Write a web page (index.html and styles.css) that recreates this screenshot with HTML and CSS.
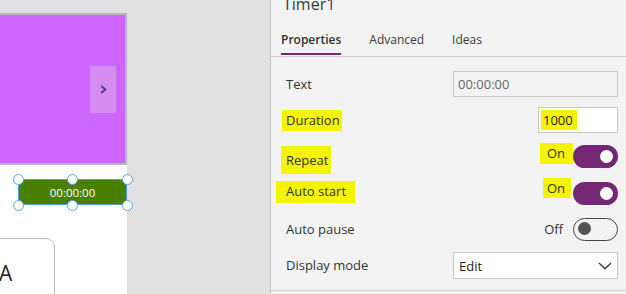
FILE: index.html
```html
<!DOCTYPE html>
<html>
<head>
<meta charset="utf-8">
<link rel="stylesheet" href="styles.css">
</head>
<body>
<div class="app">
  <div class="stage">
    <div class="canvas">
      <div class="gallery">
        <div class="nav-btn">
          <svg width="7" height="9" viewBox="0 0 7 9"><polyline points="1.2,1 5.4,4.5 1.2,8" fill="none" stroke="#4b3b8c" stroke-width="1.8"/></svg>
        </div>
      </div>
      <div class="timer">
        <span>00:00:00</span>
        <span class="handle tl"></span><span class="handle tm"></span><span class="handle tr"></span>
        <span class="handle bl"></span><span class="handle bm"></span><span class="handle br"></span>
      </div>
      <div class="card"><span class="card-text">A</span></div>
    </div>
  </div>
  <aside class="panel">
    <div class="title">Timer1</div>
    <nav class="tabs">
      <span class="tab active">Properties</span>
      <span class="tab">Advanced</span>
      <span class="tab">Ideas</span>
    </nav>
    <div class="props">
      <div class="row">
        <span class="label">Text</span>
        <div class="field">00:00:00</div>
      </div>
      <div class="row">
        <span class="label hl hl-duration">Duration</span>
        <div class="field small"><span class="hl num">1000</span></div>
      </div>
      <div class="row">
        <span class="label hl hl-repeat">Repeat</span>
        <div class="ctl"><span class="hl on1">On</span><span class="switch"></span></div>
      </div>
      <div class="row">
        <span class="label hl hl-auto">Auto start</span>
        <div class="ctl"><span class="hl on2">On</span><span class="switch"></span></div>
      </div>
      <div class="row">
        <span class="label">Auto pause</span>
        <div class="ctl"><span class="off-text">Off</span><span class="switch off"></span></div>
      </div>
      <div class="row">
        <span class="label">Display mode</span>
        <div class="select">
          <span>Edit</span>
          <svg width="14" height="8" viewBox="0 0 14 8"><polyline points="1,1 7,6.8 13,1" fill="none" stroke="#333" stroke-width="1.2"/></svg>
        </div>
      </div>
    </div>
    <div class="sep"></div>
  </aside>
</div>
</body>
</html>
```
FILE: styles.css
```css
* { box-sizing: border-box; }
html, body { margin: 0; padding: 0; }
body {
  width: 626px;
  height: 294px;
  overflow: hidden;
  font-family: "Open Sans", "Noto Sans", sans-serif;
  color: #333;
}
.app { display: flex; height: 294px; }

.stage {
  width: 270px;
  flex: none;
  background: #e1e1e1;
  padding-top: 13px;
  overflow: hidden;
}
.canvas {
  width: 127px;
  height: 281px;
  background: #fff;
}
.gallery {
  height: 152px;
  background: #cc66ff;
  border: 2px solid #b7b7b7;
  border-left: none;
  display: flex;
  justify-content: flex-end;
  align-items: center;
  padding-right: 9px;
}
.nav-btn {
  width: 26px;
  height: 47px;
  background: #d38cef;
  display: flex;
  align-items: center;
  justify-content: center;
}
.nav-btn svg { display: block; }

.timer {
  position: relative;
  margin: 14px 0 0 18px;
  width: 109px;
  height: 26px;
  background: #4b7f00;
  border: 1px solid #4a9fe3;
  color: #fff;
  font-size: 11.5px;
  display: flex;
  align-items: center;
  justify-content: center;
}
.handle {
  position: absolute;
  width: 11px;
  height: 11px;
  border-radius: 50%;
  background: #fff;
  border: 1.5px solid #5ea4e6;
}
.handle.tl { left: -6.5px; top: -6.5px; }
.handle.tm { left: calc(50% - 5.5px); top: -6.5px; }
.handle.tr { right: -6.5px; top: -6.5px; }
.handle.bl { left: -6.5px; bottom: -6.5px; }
.handle.bm { left: calc(50% - 5.5px); bottom: -6.5px; }
.handle.br { right: -6.5px; bottom: -6.5px; }

.card {
  margin: 33px 0 0 -15px;
  width: 70px;
  height: 80px;
  border: 1px solid #b9b9b9;
  border-radius: 9px;
  padding: 24px 0 0 13px;
  font-size: 21px;
  line-height: 21px;
  color: #222;
}

.panel {
  flex: 1;
  background: #f3f3f3;
  border-left: 1px solid #c6c6c6;
  color: #333;
}
.title {
  font-size: 16px;
  line-height: 20px;
  height: 20px;
  margin-top: -6px;
  padding-left: 12px;
  color: #3a3a3a;
}
.tabs {
  display: flex;
  padding-left: 10px;
  border-bottom: 1px solid #cecece;
}
.tab {
  font-size: 12px;
  line-height: 18px;
  padding: 17px 0 4px;
  margin-right: 28px;
  margin-bottom: 1px;
  border-bottom: 2px solid transparent;
  color: #3a3a3a;
}
.tab.active {
  font-weight: 600;
  border-bottom-color: #742774;
  color: #323130;
}

.props {
  padding: 9px 8px 0 15px;
  display: grid;
  grid-auto-rows: 36.3px;
}
.row {
  display: flex;
  align-items: center;
  justify-content: space-between;
  font-size: 13px;
}
.label { line-height: 19px; }
.hl { background: #f4f400; }
.hl-duration { padding: 1px 2px 1px 4px; margin-left: -4px; }
.hl-repeat { padding: 5px 3px 4px 5px; margin-left: -5px; margin-top: 6px; }
.hl-auto { padding: 1px 9px 2px 10px; margin-left: -10px; margin-bottom: 3px; }

.field {
  width: 165px;
  height: 26px;
  border: 1px solid #c8c8c8;
  padding-left: 4px;
  color: #666;
  display: flex;
  align-items: center;
}
.field.small {
  width: 80px;
  background: #fff;
  padding-left: 2px;
  color: #222;
}
.num { padding: 0 4px 0 2px; line-height: 20px; }

.ctl { display: flex; align-items: center; }
.on1 { padding: 0 8px 0 7px; line-height: 21px; margin-bottom: 7px; }
.on2 { padding: 0 6px 0 4px; line-height: 20px; margin-bottom: 10px; margin-right: 2px; }
.off-text { margin-right: 10px; color: #333; }
.switch {
  position: relative;
  width: 45px;
  height: 23px;
  border-radius: 12px;
  background: #742774;
}
.switch::after {
  content: "";
  position: absolute;
  right: 5px;
  top: 5px;
  width: 13px;
  height: 13px;
  border-radius: 50%;
  background: #fff;
}
.switch.off {
  background: transparent;
  border: 1.5px solid #444;
}
.switch.off::after {
  right: auto;
  left: 3.5px;
  top: 3.5px;
  background: #555;
}

.select {
  width: 165px;
  height: 27px;
  background: #fff;
  border: 1px solid #c8c8c8;
  display: flex;
  align-items: center;
  justify-content: space-between;
  padding: 0 5px 0 5px;
  color: #222;
}
.select svg { display: block; }

.sep {
  margin-top: 6px;
  border-top: 1px solid #cecece;
}
```
